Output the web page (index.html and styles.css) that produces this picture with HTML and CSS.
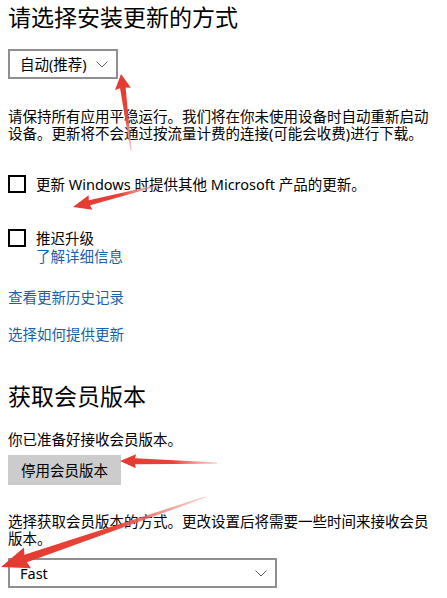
FILE: index.html
```html
<!DOCTYPE html>
<html>
    <head lang="zh-CN">
        <meta charset="UTF-8">
        <title>Windows 更新</title>
        <link rel="stylesheet" href="styles.css">
    </head>
    <body>
        <div id="page">
            <h2 class="title">请选择安装更新的方式</h2>
            <div class="select select-auto">
                <span>自动(推荐)</span>
                <svg class="chevron" width="12" height="7" viewBox="0 0 12 7"><path d="M0.5 0.5 L6 6 L11.5 0.5"/></svg>
            </div>
            <p class="desc desc-first">请保持所有应用平稳运行。我们将在你未使用设备时自动重新启动设备。更新将不会通过按流量计费的连接(可能会收费)进行下载。</p>
            <label class="check check-first"><span class="box"></span><span>更新 Windows 时提供其他 Microsoft 产品的更新。</span></label>
            <label class="check check-second"><span class="box"></span><span>推迟升级</span></label>
            <a href="#" class="link link-more">了解详细信息</a>
            <a href="#" class="link link-history">查看更新历史记录</a>
            <a href="#" class="link link-choose">选择如何提供更新</a>

            <h2 class="title title-insider">获取会员版本</h2>
            <p class="desc desc-ready">你已准备好接收会员版本。</p>
            <div class="button">停用会员版本</div>
            <p class="desc desc-way">选择获取会员版本的方式。更改设置后将需要一些时间来接收会员版本。</p>
            <div class="select select-fast">
                <span>Fast</span>
                <svg class="chevron" width="12" height="7" viewBox="0 0 12 7"><path d="M0.5 0.5 L6 6 L11.5 0.5"/></svg>
            </div>

            <!-- red annotation arrows drawn over the screenshot -->
            <svg id="marks" width="447" height="598" viewBox="0 0 447 598">
                <defs>
                    <linearGradient id="fade" x1="0" y1="0" x2="1" y2="0">
                        <stop offset="0" stop-color="#e5392f"/>
                        <stop offset="0.55" stop-color="#e8443a"/>
                        <stop offset="1" stop-color="#f39a90" stop-opacity="0.5"/>
                    </linearGradient>
                </defs>
                <g transform="translate(121 74) rotate(82.5)">
                    <path d="M0 0 L15 -8 L14 -2.8 L77 -0.6 L77 0.6 L14 2.8 L15 8 Z"/>
                </g>
                <g transform="translate(73 207) rotate(-14.2)">
                    <path d="M0 0 L18 -7.5 L17 -2.6 L90 -0.6 L90 0.6 L17 2.6 L18 7.5 Z"/>
                </g>
                <g transform="translate(120 461) rotate(1.2)">
                    <path d="M0 0 L16 -7 L15 -3 L97 -0.6 L97 0.6 L15 3 L16 7 Z"/>
                </g>
                <g transform="translate(1 567) rotate(-18.9)">
                    <path d="M0 0 L28 -11 L26 -4 L216 -0.6 L216 0.6 L26 4 L28 11 Z"/>
                </g>
            </svg>
        </div>
    </body>
</html>
```

FILE: styles.css
```css
* {
    margin: 0;
    padding: 0;
}
body {
    background: #ffffff;
    color: #000000;
    font-family: "Noto Sans", "Noto Sans CJK SC", sans-serif;
    font-size: 14.5px;
    line-height: 17px;
}
#page {
    position: relative;
    padding: 0 8px;
    height: 598px;
    overflow: hidden;
}
.title {
    font-size: 23px;
    line-height: 34px;
    font-weight: 400;
}
.select {
    display: flex;
    align-items: center;
    justify-content: space-between;
    box-sizing: border-box;
    height: 30px;
    border: 2px solid #8f8f8f;
    padding: 0 8px 0 10px;
    margin-top: 15px;
}
.select-auto {
    width: 110px;
}
.select-fast {
    width: 269px;
    margin-top: 11px;
}
.chevron path {
    fill: none;
    stroke: #606060;
    stroke-width: 1;
}
.desc-first {
    margin-top: 29px;
}
.check {
    display: flex;
    align-items: center;
    gap: 10px;
    height: 20px;
}
.check .box {
    box-sizing: border-box;
    width: 18px;
    height: 18px;
    border: 2px solid #000000;
}
.check-first {
    margin-top: 32px;
}
.check-second {
    margin-top: 34px;
}
.link {
    display: block;
    color: #1a5fac;
    text-decoration: none;
}
.link-more {
    padding-left: 28px;
}
.link-history {
    margin-top: 24px;
}
.link-choose {
    margin-top: 20px;
}
.title-insider {
    margin-top: 36px;
}
.desc-ready {
    margin-top: 18px;
}
.button {
    width: 113px;
    height: 30px;
    line-height: 30px;
    margin-top: 7px;
    background: #cccccc;
    text-align: center;
}
.desc-way {
    margin-top: 28px;
}
#marks {
    position: absolute;
    left: 0;
    top: 0;
    pointer-events: none;
}
#marks path {
    fill: url(#fade);
}
```
